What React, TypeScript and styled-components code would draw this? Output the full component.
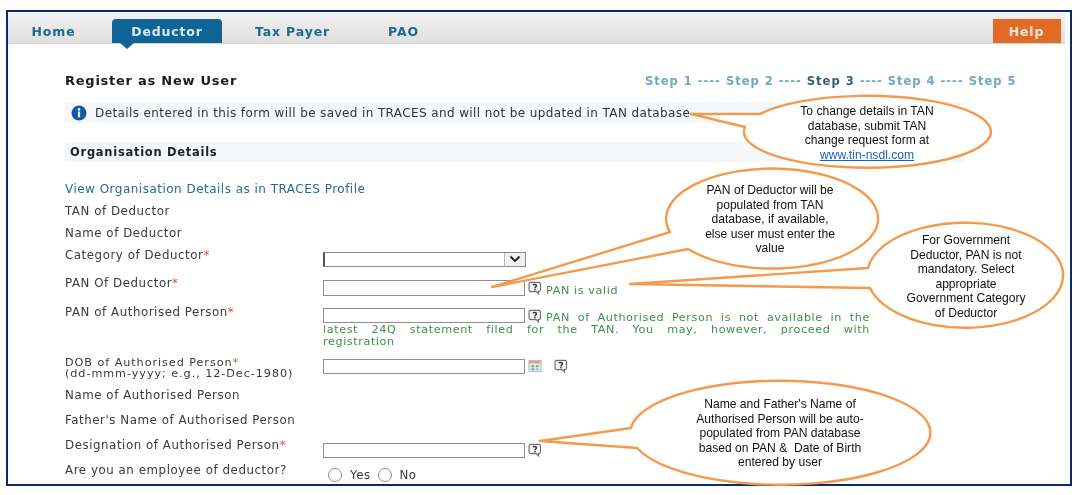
import React from "react";
import styled, { createGlobalStyle } from "styled-components";

const Global = createGlobalStyle`
  html, body { margin: 0; padding: 0; background: #fff; }
  body { font-family: "DejaVu Sans", Verdana, sans-serif; }
`;

const Page = styled.div`
  position: relative;
  width: 1084px;
  height: 495px;
  overflow: hidden;
  box-sizing: border-box;
  padding: 10px 12px 9px 6px;
`;

const Frame = styled.div`
  box-sizing: border-box;
  height: 476px;
  border: 2.5px solid #0c2a6a;
  padding: 1px 5.5px 0 0;
  overflow: hidden;
  filter: blur(0.4px);
`;

const TabBar = styled.nav`
  display: flex;
  height: 30px;
  align-items: flex-end;
  padding: 0 4px 0 0;
  background: linear-gradient(#f1f1f1, #dedede);
  border-bottom: 1px solid #d4d4d4;
  position: relative;
`;

const Tab = styled.a<{ $w: number; $active?: boolean; $shift?: number }>`
  position: relative;
  display: flex;
  justify-content: center;
  align-items: center;
  box-sizing: border-box;
  width: ${(p) => p.$w}px;
  height: 24px;
  padding-right: ${(p) => p.$shift ?? 0}px;
  font-size: 12.5px;
  font-weight: 700;
  letter-spacing: 0.85px;
  color: ${(p) => (p.$active ? "#d8ecf5" : "#1d6a8c")};
  background: ${(p) => (p.$active ? "#0d6495" : "transparent")};
  border-radius: ${(p) => (p.$active ? "4px 4px 0 0" : "0")};
  ${(p) =>
    p.$active &&
    `&::after {
      content: "";
      position: absolute;
      left: 8px;
      top: 100%;
      border-left: 7px solid transparent;
      border-right: 7px solid transparent;
      border-top: 6px solid #0d6495;
    }`}
`;

const HelpTab = styled.a`
  display: flex;
  justify-content: center;
  align-items: center;
  margin-left: auto;
  width: 68px;
  height: 24px;
  font-size: 12.5px;
  font-weight: 700;
  letter-spacing: 0.8px;
  color: #f6e3d3;
  background: #e06a26;
`;

const Content = styled.main`
  padding: 29px 48px 0 57px;
`;

const TitleRow = styled.div`
  display: flex;
  justify-content: space-between;
  align-items: center;
  height: 15px;
`;

const Title = styled.h1`
  margin: 0;
  font-size: 13px;
  font-weight: 700;
  letter-spacing: 0.75px;
  color: #1c1c1c;
`;

const Steps = styled.div`
  font-size: 11.5px;
  font-weight: 700;
  letter-spacing: 1px;
  color: #6fa8bf;
  white-space: pre;
  b { color: #2f5f75; }
`;

const InfoBar = styled.div`
  display: flex;
  align-items: center;
  gap: 8px;
  width: 900px;
  height: 21px;
  margin-top: 14px;
  padding-left: 6px;
  box-sizing: border-box;
  background: #f5f8fa;
  font-size: 12px;
  letter-spacing: 0.39px;
  color: #333;
  white-space: nowrap;
`;

const SectionBar = styled.div`
  display: flex;
  align-items: center;
  box-sizing: border-box;
  width: 900px;
  height: 20px;
  margin-top: 19px;
  padding-left: 5px;
  background: #f4f7f9;
  font-size: 11.5px;
  font-weight: 700;
  letter-spacing: 0.72px;
  color: #222;
`;

const ProfileLink = styled.a`
  display: block;
  margin-top: 21px;
  font-size: 12px;
  letter-spacing: 0.48px;
  line-height: 13px;
  color: #2b6a85;
`;

const Form = styled.div`
  display: flex;
  flex-direction: column;
  margin-top: 5px;
`;

const Row = styled.div<{ $h: number }>`
  display: grid;
  grid-template-columns: 258px 1fr;
  height: ${(p) => p.$h}px;
  align-items: start;
`;

const Label = styled.label<{ $top?: number }>`
  display: block;
  padding-top: ${(p) => p.$top ?? 5}px;
  font-size: 11.8px;
  line-height: 11px;
  letter-spacing: 0.56px;
  color: #3a3a3a;
  white-space: nowrap;
`;

const DobLabel = styled(Label)`
  font-size: 11.2px;
  letter-spacing: 0.95px;
`;

const Req = styled.span`
  color: #d9534f;
`;

const Field = styled.div<{ $top?: number }>`
  display: flex;
  align-items: center;
  gap: 3px;
  padding-top: ${(p) => p.$top ?? 0}px;
`;

const Input = styled.div`
  box-sizing: border-box;
  flex: none;
  width: 202px;
  height: 15.5px;
  border: 1px solid #8e8e8e;
  background: #fff;
`;

const Select = styled.div`
  box-sizing: border-box;
  display: flex;
  justify-content: flex-end;
  width: 203px;
  height: 15px;
  border: 1px solid #8c8c8c;
  border-left: 2px solid #555;
  background: #fff;
  color: #333;
`;

const SelectButton = styled.span`
  display: flex;
  align-items: center;
  justify-content: center;
  width: 20px;
  background: #eef0f2;
  border-left: 1px solid #b5b5b5;
`;

const Valid = styled.span`
  font-size: 11.2px;
  letter-spacing: 0.6px;
  color: #3f8f4a;
  margin: 4px 0 0 1px;
`;

const Message = styled.div`
  width: 547px;
  padding-top: 12.5px;
  font-size: 11.2px;
  line-height: 12.3px;
  letter-spacing: 0.6px;
  color: #3f8f4a;
`;

const MessageLines = styled.div`
  text-align: justify;
  text-align-last: justify;
`;

const FloatField = styled.div`
  float: left;
  display: flex;
  align-items: center;
  gap: 3px;
  height: 16px;
  margin: -4px 4px 0 0;
`;

const RadioGroup = styled.div`
  display: flex;
  align-items: center;
  padding: 8.5px 0 0 5px;
  font-size: 11.8px;
  letter-spacing: 0.5px;
  color: #3a3a3a;
`;

const Radio = styled.span`
  box-sizing: border-box;
  width: 14px;
  height: 14px;
  border: 1px solid #8a8a8a;
  border-radius: 50%;
  background: #fff;
`;

const OptionText = styled.span`
  margin: 0 7px 0 8px;
`;

const IconGap = styled.span`
  width: 6px;
`;

const Overlay = styled.svg`
  position: absolute;
  left: 0;
  top: 0;
  pointer-events: none;
`;

const Bubble = styled.div<{ $x: number; $y: number; $w: number }>`
  position: absolute;
  left: ${(p) => p.$x}px;
  top: ${(p) => p.$y}px;
  width: ${(p) => p.$w}px;
  font-family: "Liberation Sans", Arial, sans-serif;
  font-size: 12.1px;
  line-height: 14.5px;
  text-align: center;
  color: #111;
  white-space: pre;
  a { color: #1a5fc4; text-decoration: underline; }
`;

const IconSvg = styled.svg`
  flex: none;
  display: block;
`;

const HelpIcon = () => (
  <IconSvg width="14" height="14" viewBox="0 0 16 16">
    <path d="M3 1.5h9.5a1.8 1.8 0 0 1 1.8 1.8v7a1.8 1.8 0 0 1-1.8 1.8h-.7l.2 2.6-2.6-2.6H3a1.8 1.8 0 0 1-1.8-1.8v-7A1.8 1.8 0 0 1 3 1.5z" fill="#f4f4f4" stroke="#6f6f6f" strokeWidth="1.3" />
    <path d="M5.8 4.9c.4-1.2 3.8-1.5 3.9.6 0 1.4-1.8 1.3-1.8 2.8" fill="none" stroke="#333" strokeWidth="1.6" />
    <rect x="7.1" y="9" width="1.7" height="1.7" fill="#333" />
  </IconSvg>
);

const InfoIcon = () => (
  <IconSvg width="16" height="16" viewBox="0 0 16 16">
    <circle cx="8" cy="8" r="7.5" fill="#14589f" />
    <circle cx="8" cy="4.4" r="1.3" fill="#e8f1fa" />
    <rect x="6.9" y="6.5" width="2.2" height="5.8" fill="#e8f1fa" />
  </IconSvg>
);

const CalendarIcon = () => (
  <IconSvg width="14" height="14" viewBox="0 0 16 15">
    <rect x="1" y="1" width="14" height="13" fill="#dfe9ef" stroke="#a9b9c4" />
    <rect x="1.5" y="1.5" width="13" height="3" fill="#d9a777" />
    <rect x="4" y="6.5" width="3" height="2.5" fill="#8fb06f" />
    <rect x="9" y="6.5" width="3" height="2.5" fill="#7fa3bb" />
    <rect x="4" y="10" width="3" height="2.5" fill="#7fa3bb" />
    <rect x="9" y="10" width="3" height="2.5" fill="#9fb8c8" />
  </IconSvg>
);

const Chevron = () => (
  <svg width="12" height="8" viewBox="0 0 12 8">
    <path d="M1.5 1.5 6 6l4.5-4.5" fill="none" stroke="#222" strokeWidth="1.9" />
  </svg>
);

const callouts = [
  "M760 114 L691 114 L745 127 A123.5 36 0 1 0 760 114 Z",
  "M670 232 L492 287 L688 249 A106 50 0 1 0 670 232 Z",
  "M868 268 L630 284 L870 288 A98 52.5 0 1 0 868 268 Z",
  "M631 428 L540 441 L637 448 A150 52 0 1 0 631 428 Z",
];

export default function App() {
  return (
    <Page>
      <Global />
      <Frame>
        <TabBar>
          <Tab $w={104} $shift={13}>Home</Tab>
          <Tab $w={110} $active>Deductor</Tab>
          <Tab $w={141}>Tax Payer</Tab>
          <Tab $w={81}>PAO</Tab>
          <HelpTab>Help</HelpTab>
        </TabBar>
        <Content>
          <TitleRow>
            <Title>Register as New User</Title>
            <Steps>
              Step 1 ---- Step 2 ---- <b>Step 3</b> ---- Step 4 ---- Step 5
            </Steps>
          </TitleRow>
          <InfoBar>
            <InfoIcon />
            Details entered in this form will be saved in TRACES and will not be updated in TAN database
          </InfoBar>
          <SectionBar>Organisation Details</SectionBar>
          <ProfileLink>View Organisation Details as in TRACES Profile</ProfileLink>
          <Form>
            <Row $h={22}><Label>TAN of Deductor</Label></Row>
            <Row $h={22}><Label>Name of Deductor</Label></Row>
            <Row $h={26}>
              <Label>Category of Deductor<Req>*</Req></Label>
              <Field $top={6.5}>
                <Select>
                  <SelectButton><Chevron /></SelectButton>
                </Select>
              </Field>
            </Row>
            <Row $h={28}>
              <Label $top={7}>PAN Of Deductor<Req>*</Req></Label>
              <Field $top={8.5}>
                <Input />
                <HelpIcon />
                <Valid>PAN is valid</Valid>
              </Field>
            </Row>
            <Row $h={53}>
              <Label $top={8}>PAN of Authorised Person<Req>*</Req></Label>
              <Message>
                <MessageLines>
                  <FloatField>
                    <Input />
                    <HelpIcon />
                  </FloatField>
                  PAN of Authorised Person is not available in the latest 24Q statement filed for the TAN. You may, however, proceed with
                </MessageLines>
                registration
              </Message>
            </Row>
            <Row $h={33}>
              <DobLabel $top={5}>
                DOB of Authorised Person<Req>*</Req>
                <br />
                (dd-mmm-yyyy; e.g., 12-Dec-1980)
              </DobLabel>
              <Field $top={6.5}>
                <Input />
                <CalendarIcon />
                <IconGap />
                <HelpIcon />
              </Field>
            </Row>
            <Row $h={25}><Label>Name of Authorised Person</Label></Row>
            <Row $h={25}><Label>Father's Name of Authorised Person</Label></Row>
            <Row $h={24}>
              <Label>Designation of Authorised Person<Req>*</Req></Label>
              <Field $top={7.5}>
                <Input />
                <HelpIcon />
              </Field>
            </Row>
            <Row $h={22}>
              <Label $top={6}>Are you an employee of deductor?</Label>
              <RadioGroup>
                <Radio /><OptionText>Yes</OptionText><Radio /><OptionText>No</OptionText>
              </RadioGroup>
            </Row>
          </Form>
        </Content>
      </Frame>
      <Overlay width="1084" height="495" viewBox="0 0 1084 495">
        {callouts.map((d) => (
          <path key={d} d={d} fill="#fff" stroke="#f59a4d" strokeWidth="2.4" strokeLinejoin="round" />
        ))}
      </Overlay>
      <Bubble $x={767} $y={104} $w={200}>
        {"To change details in TAN\ndatabase, submit TAN\nchange request form at\n"}
        <a>www.tin-nsdl.com</a>
      </Bubble>
      <Bubble $x={670} $y={183} $w={200}>
        {"PAN of Deductor will be\npopulated from TAN\ndatabase, if available,\nelse user must enter the\nvalue"}
      </Bubble>
      <Bubble $x={866} $y={233} $w={200}>
        {"For Government\nDeductor, PAN is not\nmandatory. Select\nappropriate\nGovernment Category\nof Deductor"}
      </Bubble>
      <Bubble $x={680} $y={397} $w={200}>
        {"Name and Father's Name of\nAuthorised Person will be auto-\npopulated from PAN database\nbased on PAN &  Date of Birth\nentered by user"}
      </Bubble>
    </Page>
  );
}
